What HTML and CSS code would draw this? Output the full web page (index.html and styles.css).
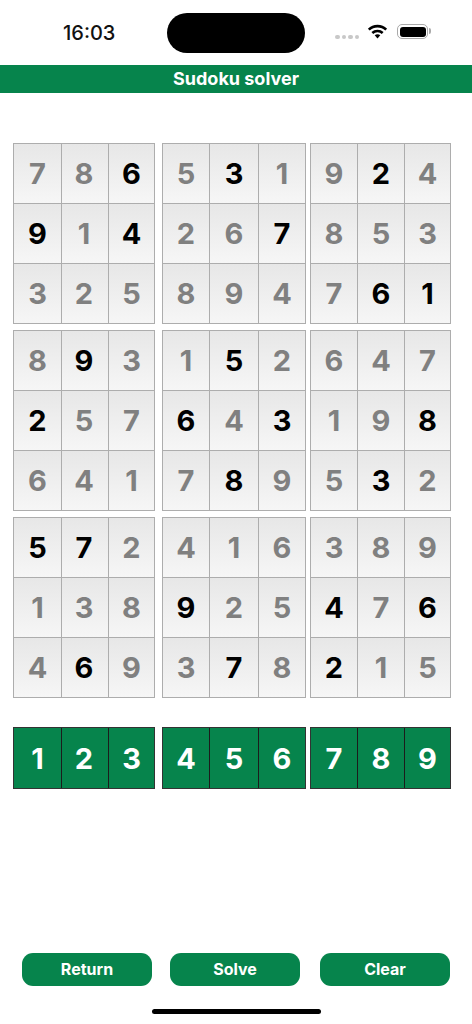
FILE: index.html
```html
<!DOCTYPE html>
<html lang="en">
<head>
<meta charset="UTF-8">
<title>Sudoku solver</title>
<link rel="stylesheet" href="styles.css">
</head>
<body>
<div class="statusbar">
	<div class="time">16:03</div>
	<div class="island"></div>
	<div class="signal"><i></i><i></i><i></i><i></i></div>
	<svg class="wifi" width="21" height="15" viewBox="0 0 21 15">
		<path class="wifi-arc" d="M1.800 5.600C6.600 .9 14.400 .9 19.200 5.600"/>
		<path class="wifi-arc" d="M5.300 9C8.200 6.300 12.800 6.300 15.700 9"/>
		<path d="M7.700 11.300C9.300 9.900 11.700 9.900 13.300 11.300L10.500 14.400z"/>
	</svg>
	<div class="battery"><div class="battery-level"></div></div>
</div>
<div class="titlebar">Sudoku solver</div>

<div class="board">
	<div class="block">
		<div class="cell">7</div><div class="cell">8</div><div class="cell set">6</div>
		<div class="cell set">9</div><div class="cell">1</div><div class="cell set">4</div>
		<div class="cell">3</div><div class="cell">2</div><div class="cell">5</div>
	</div>
	<div class="block">
		<div class="cell">5</div><div class="cell set">3</div><div class="cell">1</div>
		<div class="cell">2</div><div class="cell">6</div><div class="cell set">7</div>
		<div class="cell">8</div><div class="cell">9</div><div class="cell">4</div>
	</div>
	<div class="block">
		<div class="cell">9</div><div class="cell set">2</div><div class="cell">4</div>
		<div class="cell">8</div><div class="cell">5</div><div class="cell">3</div>
		<div class="cell">7</div><div class="cell set">6</div><div class="cell set">1</div>
	</div>
	<div class="block">
		<div class="cell">8</div><div class="cell set">9</div><div class="cell">3</div>
		<div class="cell set">2</div><div class="cell">5</div><div class="cell">7</div>
		<div class="cell">6</div><div class="cell">4</div><div class="cell">1</div>
	</div>
	<div class="block">
		<div class="cell">1</div><div class="cell set">5</div><div class="cell">2</div>
		<div class="cell set">6</div><div class="cell">4</div><div class="cell set">3</div>
		<div class="cell">7</div><div class="cell set">8</div><div class="cell">9</div>
	</div>
	<div class="block">
		<div class="cell">6</div><div class="cell">4</div><div class="cell">7</div>
		<div class="cell">1</div><div class="cell">9</div><div class="cell set">8</div>
		<div class="cell">5</div><div class="cell set">3</div><div class="cell">2</div>
	</div>
	<div class="block">
		<div class="cell set">5</div><div class="cell set">7</div><div class="cell">2</div>
		<div class="cell">1</div><div class="cell">3</div><div class="cell">8</div>
		<div class="cell">4</div><div class="cell set">6</div><div class="cell">9</div>
	</div>
	<div class="block">
		<div class="cell">4</div><div class="cell">1</div><div class="cell">6</div>
		<div class="cell set">9</div><div class="cell">2</div><div class="cell">5</div>
		<div class="cell">3</div><div class="cell set">7</div><div class="cell">8</div>
	</div>
	<div class="block">
		<div class="cell">3</div><div class="cell">8</div><div class="cell">9</div>
		<div class="cell set">4</div><div class="cell">7</div><div class="cell set">6</div>
		<div class="cell set">2</div><div class="cell">1</div><div class="cell">5</div>
	</div>
</div>

<div class="numpad">
	<div class="keys"><div class="key">1</div><div class="key">2</div><div class="key">3</div></div>
	<div class="keys"><div class="key">4</div><div class="key">5</div><div class="key">6</div></div>
	<div class="keys"><div class="key">7</div><div class="key">8</div><div class="key">9</div></div>
</div>

<div class="actions">
	<button class="action">Return</button>
	<button class="action">Solve</button>
	<button class="action">Clear</button>
</div>
<div class="homebar"></div>
</body>
</html>
```

FILE: styles.css
```css
html, body {
	margin: 0;
	padding: 0;
}

body {
	background-color: #fff;
	font-family: Inter, "Liberation Sans", sans-serif;
	width: 472px;
	height: 1024px;
	overflow: hidden;
}

.statusbar {
	display: flex;
	align-items: center;
	height: 65px;
	box-sizing: border-box;
	padding: 1px 0 0 63px;
}

.time {
	width: 104px;
	font-size: 20px;
	font-weight: 500;
	color: #111;
}

.island {
	width: 138px;
	height: 40px;
	margin-right: 30px;
	border-radius: 20px;
	background-color: #000;
}

.signal {
	display: flex;
	gap: 2px;
	width: 32px;
	margin-top: 8px;
}

.signal i {
	width: 4.5px;
	height: 4.5px;
	border-radius: 50%;
	background-color: #c8c8c8;
}

.wifi {
	margin-right: 9px;
	margin-top: -4px;
}

.wifi-arc {
	fill: none;
	stroke: #000;
	stroke-width: 2.6;
}

.battery {
	position: relative;
	width: 31px;
	height: 15px;
	margin-top: -3px;
	box-sizing: border-box;
	padding: 1.5px;
	border: 1.5px solid #aaa;
	border-radius: 5px;
}

.battery::after {
	content: "";
	position: absolute;
	right: -4px;
	top: 3px;
	width: 2px;
	height: 6px;
	border-radius: 0 2px 2px 0;
	background-color: #aaa;
}

.battery-level {
	height: 100%;
	border-radius: 3px;
	background-color: #000;
}

.titlebar {
	height: 28px;
	line-height: 28px;
	background-color: #06844c;
	color: #fff;
	font-size: 18px;
	font-weight: 700;
	text-align: center;
}

.board, .numpad {
	display: grid;
	grid-template-columns: 149px 148px 141px;
	margin-left: 13px;
}

.board {
	grid-auto-rows: 181px;
	row-gap: 6px;
	margin-top: 50px;
}

.numpad {
	margin-top: 29px;
}

/* the three boxes of a row are not quite the same width */
.block, .keys {
	display: grid;
}

.block:nth-child(3n+1), .keys:nth-child(3n+1) {
	grid-template-columns: 48px 47px 45px;
	margin-right: 7px;
}

.block:nth-child(3n+2), .keys:nth-child(3n+2) {
	grid-template-columns: 47px 49px 46px;
	margin-right: 4px;
}

.block:nth-child(3n), .keys:nth-child(3n) {
	grid-template-columns: 47px 47px 45px;
}

.block {
	grid-template-rows: 60px 60px 59px;
	border: 1px solid #adadad;
}

.cell {
	display: flex;
	align-items: center;
	justify-content: center;
	box-sizing: border-box;
	padding-bottom: 1px;
	border-right: 1px solid #adadad;
	border-bottom: 1px solid #adadad;
	background: linear-gradient(#e7e7e7, #f6f6f6);
	color: #808080;
	font-size: 29px;
	font-weight: 650;
}

.cell:nth-child(3n) {
	border-right: 0;
}

.cell:nth-child(n+7) {
	border-bottom: 0;
}

.block:nth-child(3n+1) .cell:nth-child(3n+2), .keys:nth-child(3n+1) .key:nth-child(2) {
	padding-right: 2px;
}

.set {
	color: #000;
}

.keys {
	height: 62px;
	box-sizing: border-box;
	border: 1px solid #333;
}

.key {
	display: flex;
	align-items: center;
	justify-content: center;
	box-sizing: border-box;
	border-right: 1px solid #1c1c1c;
	background-color: #06844c;
	color: #fff;
	font-size: 29px;
	font-weight: 650;
}

.key:last-child {
	border-right: 0;
}

.actions {
	display: flex;
	gap: 18px;
	margin: 164px 0 0 22px;
}

.action {
	width: 130px;
	height: 33px;
	padding: 0 0 2px;
	border: 0;
	border-radius: 11px;
	background-color: #06844c;
	color: #fff;
	font-family: inherit;
	font-size: 16px;
	font-weight: 700;
}

.action:last-child {
	margin-left: 2px;
}

.homebar {
	width: 169px;
	height: 5px;
	margin: 23px 0 0 152px;
	border-radius: 3px;
	background-color: #000;
}
```
